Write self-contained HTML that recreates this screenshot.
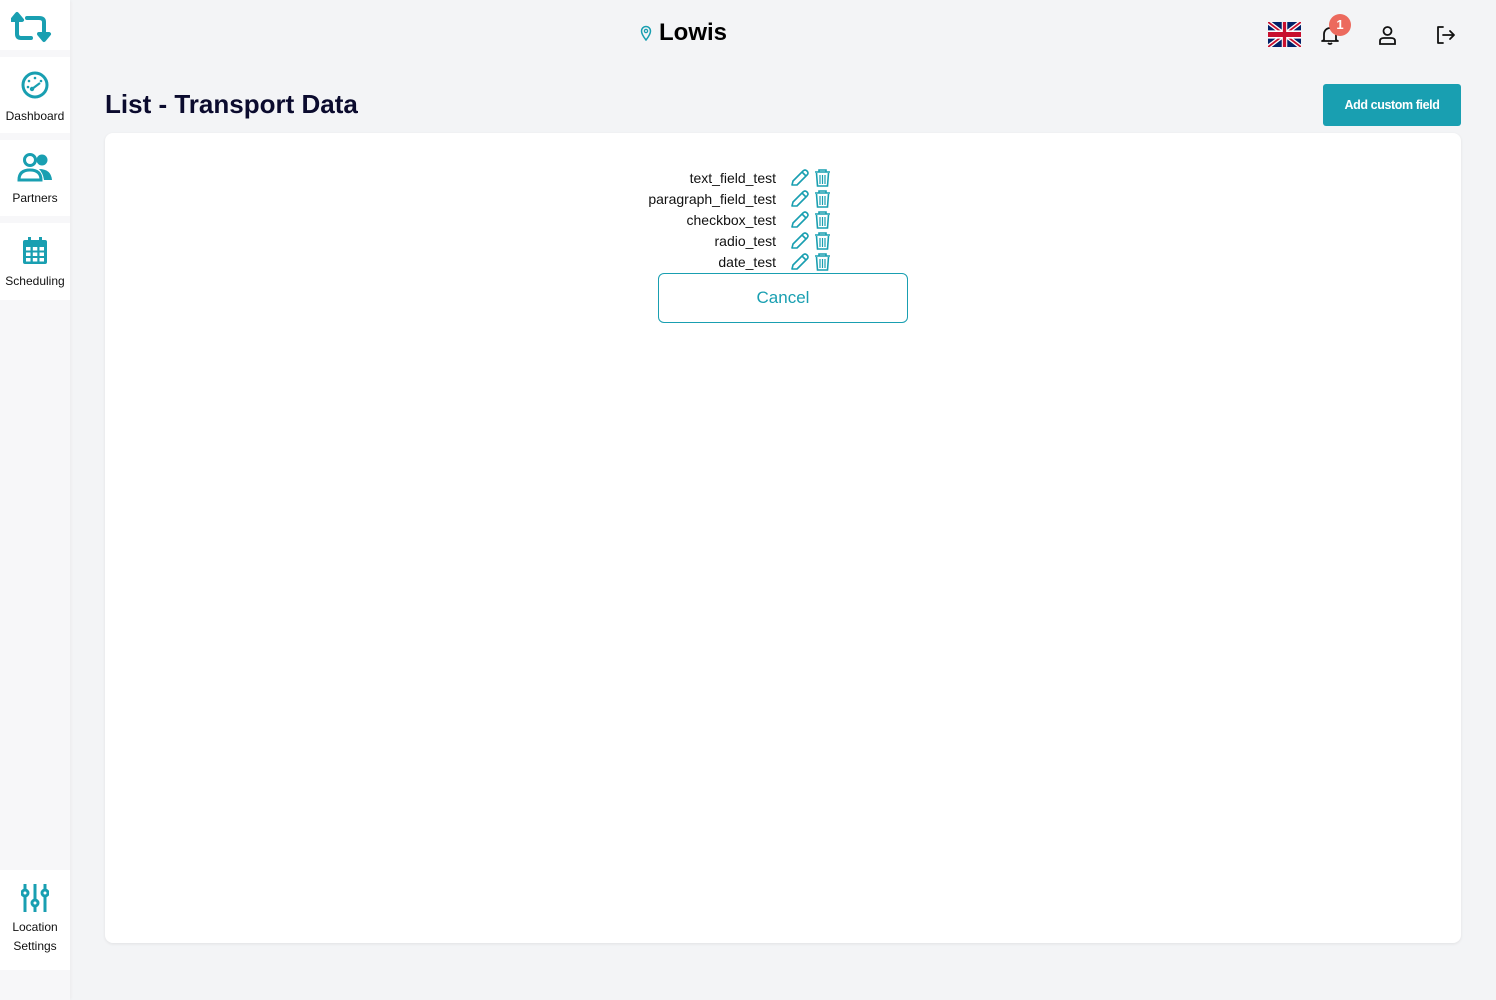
<!DOCTYPE html>
<html><head><meta charset="utf-8"><style>
*{box-sizing:border-box;margin:0;padding:0}
body{width:1496px;height:1000px;background:#f3f4f6;font-family:"Liberation Sans",sans-serif;position:relative;overflow:hidden}
.sb{position:absolute;left:0;top:0;width:70px;height:1000px;background:#f7f7f9;box-shadow:1px 0 3px rgba(0,0,0,0.04)}
.it{position:absolute;left:0;width:70px;background:#fff;text-align:center;font-size:12px;color:#111}
.it svg{display:block;margin:0 auto}
</style></head><body>
<div class="sb">
 <div class="it" style="top:0;height:50px">
  <svg width="48" height="34" viewBox="0 0 48 34" style="margin-top:10px" fill="none" stroke="#199fb1" stroke-width="4" stroke-linecap="round" stroke-linejoin="round">
   <path d="M6 12 L6 24 Q6 28 10 28 L20 28"/><path d="M1 10 L6 4 L11 10 Z" fill="#199fb1"/>
   <path d="M16 8 L28 8 Q33 8 33 12 L33 24"/><path d="M28 24 L33 30 L38 24 Z" fill="#199fb1"/>
  </svg></div>
 <div class="it" style="top:57px;height:76px">
  <svg width="30" height="30" viewBox="0 0 30 30" style="margin-top:13px"><circle cx="15" cy="15" r="12" fill="none" stroke="#199fb1" stroke-width="3"/><circle cx="15" cy="8" r="1.3" fill="#199fb1"/><circle cx="9" cy="11" r="1.3" fill="#199fb1"/><circle cx="21" cy="11" r="1.3" fill="#199fb1"/><circle cx="8" cy="17" r="1.3" fill="#199fb1"/><circle cx="12" cy="19" r="2.2" fill="#199fb1"/><path d="M12 19 L20 13" stroke="#199fb1" stroke-width="2.2"/></svg>
  <div style="margin-top:9px">Dashboard</div></div>
 <div class="it" style="top:140px;height:76px">
  <svg width="36" height="30" viewBox="0 0 36 30" style="margin-top:12px"><circle cx="13" cy="8" r="5.5" fill="none" stroke="#199fb1" stroke-width="3"/><circle cx="25" cy="8" r="5.5" fill="#199fb1"/><path d="M2 28 Q2 18 13 18 Q24 18 24 28 Z" fill="none" stroke="#199fb1" stroke-width="3"/><path d="M22 17 Q34 17 35 28 L27 28 Q26 21 22 17Z" fill="#199fb1"/></svg>
  <div style="margin-top:9px">Partners</div></div>
 <div class="it" style="top:223px;height:77px">
  <svg width="26" height="30" viewBox="0 0 26 30" style="margin-top:13px"><rect x="1" y="4" width="24" height="24" rx="2" fill="#199fb1"/><rect x="6" y="1" width="3" height="6" fill="#199fb1"/><rect x="17" y="1" width="3" height="6" fill="#199fb1"/><g fill="#fff"><rect x="4" y="11" width="4.5" height="3.5"/><rect x="10.8" y="11" width="4.5" height="3.5"/><rect x="17.5" y="11" width="4.5" height="3.5"/><rect x="4" y="16.5" width="4.5" height="3.5"/><rect x="10.8" y="16.5" width="4.5" height="3.5"/><rect x="17.5" y="16.5" width="4.5" height="3.5"/><rect x="4" y="22" width="4.5" height="3.5"/><rect x="10.8" y="22" width="4.5" height="3.5"/><rect x="17.5" y="22" width="4.5" height="3.5"/></g></svg>
  <div style="margin-top:8px">Scheduling</div></div>
 <div class="it" style="top:870px;height:100px">
  <svg width="28" height="30" viewBox="0 0 28 30" style="margin-top:13px" fill="none" stroke="#199fb1" stroke-width="3"><path d="M4 1V29M14 1V29M24 1V29"/><circle cx="4" cy="10" r="3" fill="#fff"/><circle cx="14" cy="20" r="3" fill="#fff"/><circle cx="24" cy="10" r="3" fill="#fff"/></svg>
  <div style="margin-top:5px;line-height:19px">Location<br>Settings</div></div>
</div>

<div style="position:absolute;left:640px;top:19px;display:flex;align-items:center">
 <svg width="12" height="16" viewBox="0 0 12 16"><path d="M6 15 C2 10 1.5 8 1.5 6 A4.5 4.5 0 0 1 10.5 6 C10.5 8 10 10 6 15Z" fill="none" stroke="#199fb1" stroke-width="1.5"/><circle cx="6" cy="6" r="1.6" fill="none" stroke="#199fb1" stroke-width="1.3"/></svg>
 <span style="font-size:24px;font-weight:bold;color:#000;margin-left:7px">Lowis</span>
</div>

<svg style="position:absolute;left:1268px;top:22px" width="33" height="25" viewBox="0 0 60 30" preserveAspectRatio="none"><rect width="60" height="30" fill="#012169"/><path d="M0 0L60 30M60 0L0 30" stroke="#fff" stroke-width="6"/><path d="M0 0L60 30M60 0L0 30" stroke="#C8102E" stroke-width="2.5"/><path d="M30 0V30M0 15H60" stroke="#fff" stroke-width="10"/><path d="M30 0V30M0 15H60" stroke="#C8102E" stroke-width="6"/></svg>
<svg style="position:absolute;left:1320px;top:25px" width="20" height="20" viewBox="0 0 20 20" fill="none" stroke="#111" stroke-width="1.8"><path d="M4 15 L4 9 A6 6 0 0 1 16 9 L16 15 L18 16 L2 16 Z" stroke-linejoin="round"/><path d="M8 18 Q10 20 12 18"/></svg>
<div style="position:absolute;left:1329px;top:14px;width:22px;height:22px;border-radius:50%;background:#ec6a5e;color:#fff;font-size:13px;font-weight:bold;text-align:center;line-height:22px">1</div>
<svg style="position:absolute;left:1378px;top:25px" width="19" height="20" viewBox="0 0 19 20" fill="none" stroke="#111" stroke-width="1.8"><circle cx="9.5" cy="6" r="4"/><path d="M2 19 L2 16 Q2 13 6 13 L13 13 Q17 13 17 16 L17 19 Z"/></svg>
<svg style="position:absolute;left:1436px;top:26px" width="20" height="18" viewBox="0 0 20 18" fill="none" stroke="#111" stroke-width="1.8" stroke-linecap="round" stroke-linejoin="round"><path d="M7 1 L2 1 L2 17 L7 17"/><path d="M7 9 H18 M14 5 L18 9 L14 13"/></svg>

<div style="position:absolute;left:105px;top:89px;font-size:26px;font-weight:bold;color:#0b0b2e">List - Transport Data</div>
<div style="position:absolute;left:1323px;top:84px;width:138px;height:42px;background:#199fb1;border-radius:3px;color:#fff;font-size:12.5px;font-weight:bold;text-align:center;line-height:42px;letter-spacing:-0.4px">Add custom field</div>

<div style="position:absolute;left:105px;top:133px;width:1356px;height:810px;background:#fff;border-radius:8px;box-shadow:0 1px 3px rgba(0,0,0,0.08)">
 <div style="position:absolute;left:0;top:35px;width:671px;text-align:right;font-size:14px;color:#111;line-height:21px">text_field_test<br>paragraph_field_test<br>checkbox_test<br>radio_test<br>date_test</div>
 <div style="position:absolute;left:684px;top:35px">
  <svg width="44" height="105" viewBox="0 0 44 105">
   <defs><g id="r"><path d="M3 17 L4 13 L14 3 Q16 1 18 3 Q20 5 18 7 L8 17 Z M13 4 L17 8" fill="none" stroke="#199fb1" stroke-width="1.6" stroke-linejoin="round"/><g fill="none" stroke="#199fb1" stroke-width="1.6"><path d="M26 4 H41 M30 4 V2 H37 V4"/><path d="M27.5 5 L28.5 18 H38.5 L39.5 5"/><path d="M31 7 V16 M33.5 7 V16 M36 7 V16" stroke-width="1.2"/></g></g></defs>
   <use href="#r" y="0"/><use href="#r" y="21"/><use href="#r" y="42"/><use href="#r" y="63"/><use href="#r" y="84"/>
  </svg></div>
 <div style="position:absolute;left:553px;top:140px;width:250px;height:50px;border:1px solid #199fb1;border-radius:6px;color:#199fb1;font-size:17px;text-align:center;line-height:48px">Cancel</div>
</div>
</body></html>
